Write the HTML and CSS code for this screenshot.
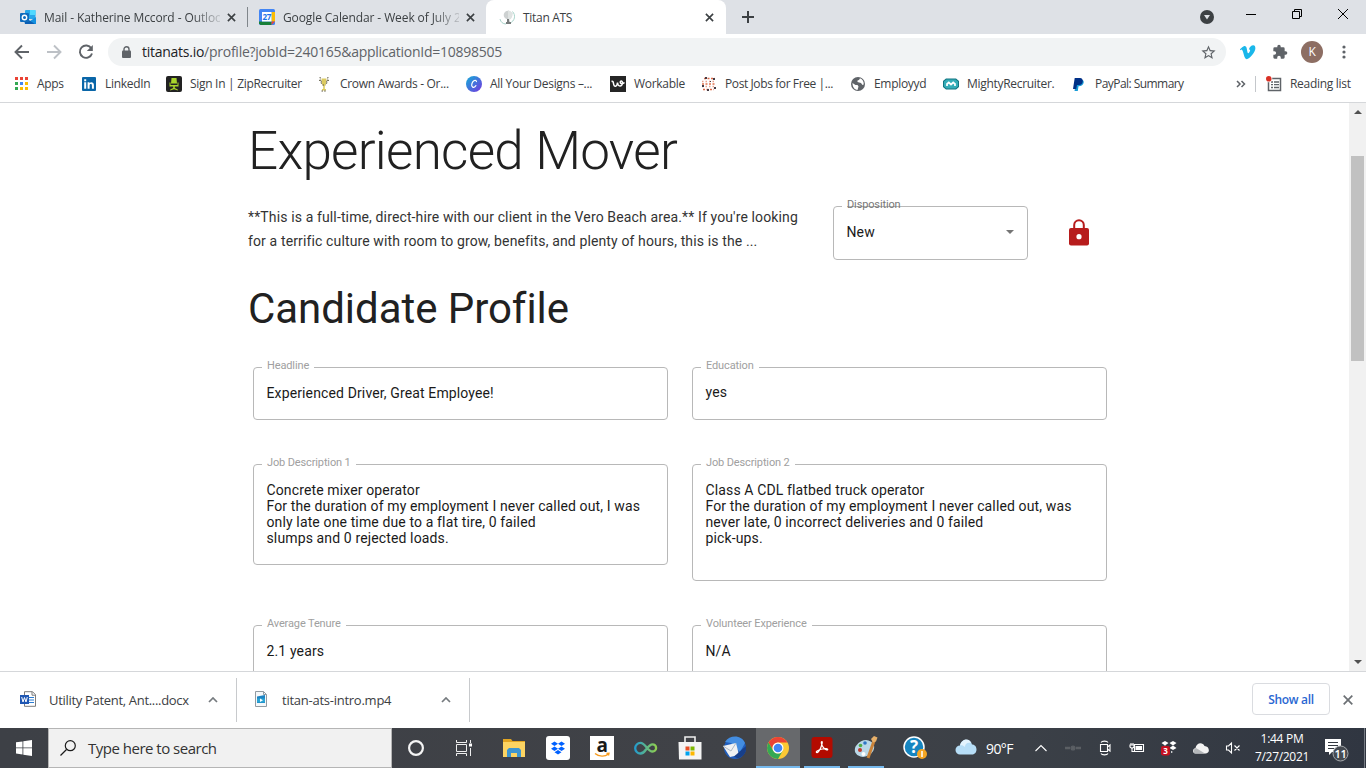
FILE: index.html
```html
<!DOCTYPE html>
<html lang="en">
<head>
    <meta charset="UTF-8">
    <meta name="viewport" content="width=device-width, initial-scale=1.0">
    <title>Titan ATS</title>
    <link rel="stylesheet" href="styles.css">
</head>
<body>
    <!-- tabs -->
    <div class="tabstrip">
        <div class="tab">
            <svg class="favicon" viewBox="0 0 16 16"><rect x="5" y="1" width="10.500" height="9" rx="1" fill="#28a8ea"/><rect x="10" y="1" width="5.500" height="5" fill="#50d9ff"/><path d="M4 9l6 3 6-4v7H5z" fill="#1490df"/><path d="M4 8l11 7H5z" fill="#0a5fb4"/><rect y="4" width="9" height="9" rx="1" fill="#0f6cbd"/><circle cx="4.500" cy="8.500" r="2.200" fill="none" stroke="#fff" stroke-width="1.400"/></svg>
            <span class="tab-title tab-mail">Mail - Katherine Mccord - Outloo</span>
            <svg class="tab-close" viewBox="0 0 10 10"><path d="M1 1l8 8M9 1L1 9"/></svg>
        </div>
        <div class="tab tab-divided">
            <svg class="favicon" viewBox="0 0 16 16"><rect width="16" height="16" rx="1.500" fill="#4285f4"/><path d="M12.500 3H16v9.500h-3.500z" fill="#fbbc04"/><path d="M0 12.500h12.500V16H1.500L0 14.500z" fill="#188038"/><path d="M12.500 12.500H16L12.500 16z" fill="#ea4335"/><rect x="3" y="3" width="9.500" height="9.500" fill="#fff"/><text x="7.800" y="10.700" font-size="8" font-weight="700" text-anchor="middle" fill="#1a73e8">27</text></svg>
            <span class="tab-title tab-cal">Google Calendar - Week of July 2</span>
            <svg class="tab-close" viewBox="0 0 10 10"><path d="M1 1l8 8M9 1L1 9"/></svg>
        </div>
        <div class="tab active">
            <svg class="favicon" viewBox="0 0 16 16"><circle cx="9" cy="6" r="4.300" fill="#cdd1d1"/><path d="M9 1l5 3-2 6-3 1z" fill="#dfe3e2"/><path d="M13.500 2.500A7 7 0 0 1 11 14M1 10a6.500 6.500 0 0 0 6 5" fill="none" stroke="#a9d4cb"/><path d="M8 10h2l.5 3H12v2H7v-2h1z" fill="#777c7c"/></svg>
            <span class="tab-title">Titan ATS</span>
            <svg class="tab-close" viewBox="0 0 10 10"><path d="M1 1l8 8M9 1L1 9"/></svg>
        </div>
        <svg class="new-tab" viewBox="0 0 12 12"><path d="M6 0v12M0 6h12"/></svg>
        <div class="window-buttons">
            <svg class="media" viewBox="0 0 14 14"><circle cx="7" cy="7" r="7" fill="#3c4043"/><path d="M4 5h6L7 9.500z" fill="#dee1e6"/></svg>
            <svg class="win" viewBox="0 0 12 12"><path d="M1 6.500h10"/></svg>
            <svg class="win" viewBox="0 0 12 12"><path d="M1.500 3.500h7v7h-7zM3.500 3.500v-2h7v7h-2"/></svg>
            <svg class="win" viewBox="0 0 12 12"><path d="M1 1l10 10M11 1L1 11"/></svg>
        </div>
    </div>

    <!-- address bar -->
    <div class="toolbar">
        <svg class="nav" viewBox="0 0 16 16"><path d="M15 8H2M8 1.500L1.500 8 8 14.500"/></svg>
        <svg class="nav off" viewBox="0 0 16 16"><path d="M1 8h13M8 1.500L14.500 8 8 14.500"/></svg>
        <svg class="nav" viewBox="0 0 16 16"><path d="M13.300 4.300A6.200 6.200 0 1 0 14 9.500"/><path d="M14.800 1v6H8.800z" fill="#5f6368" stroke="none"/></svg>
        <div class="omnibox">
            <svg class="lock" viewBox="0 0 10 13"><rect y="4.500" width="9" height="7.500" rx="1" fill="#5f6368"/><path d="M2 5V3.200a2.500 2.500 0 0 1 5 0V5" fill="none" stroke="#5f6368" stroke-width="1.400"/></svg>
            <span class="url"><b>titanats.io</b>/profile?jobId=240165&amp;applicationId=10898505</span>
            <svg class="star" viewBox="0 0 24 24"><path d="M22 9.240l-7.190-.620L12 2 9.190 8.630 2 9.240l5.460 4.730L5.820 21 12 17.270 18.180 21l-1.630-7.030L22 9.240zM12 15.400l-3.760 2.270 1-4.280-3.320-2.880 4.380-.380L12 6.100l1.710 4.040 4.380.380-3.320 2.880 1 4.280L12 15.400z" fill="#5f6368"/></svg>
        </div>
        <svg class="ext" viewBox="0 0 24 24"><path d="M23 7c-.1 2.300-1.700 5.500-4.800 9.500C15 20.600 12.300 22.700 10 22.700c-1.400 0-2.500-1.300-3.500-3.800L4.600 12c-.7-2.500-1.500-3.800-2.300-3.800L.7 9.200-.2 8C2 6.200 4.700 3.200 6.500 3c2-.2 3.300 1.200 3.700 4.200 1.200 7.300 1.800 8.300 4 4.800 1.500-2.400 1.400-4.400-.9-3.600C14.300 4.200 17 1.600 20 1.700c2.200.1 3.200 1.900 3 5.300z" fill="#1ab7ea"/></svg>
        <svg class="ext" viewBox="0 0 24 24"><path d="M20.500 11H19V7a2 2 0 0 0-2-2h-4V3.500a2.500 2.500 0 0 0-5 0V5H4a2 2 0 0 0-2 2v3.800h1.500a2.700 2.700 0 0 1 0 5.400H2V20a2 2 0 0 0 2 2h3.800v-1.500a2.700 2.700 0 0 1 5.400 0V22H17a2 2 0 0 0 2-2v-4h1.500a2.500 2.500 0 0 0 0-5z" fill="#5f6368"/></svg>
        <div class="avatar">K</div>
        <svg class="dots" viewBox="0 0 4 14"><circle cx="2" cy="2" r="1.600"/><circle cx="2" cy="7" r="1.600"/><circle cx="2" cy="12" r="1.600"/></svg>
    </div>

    <!-- bookmarks -->
    <div class="bookmarks">
        <div class="bookmark"><svg viewBox="0 0 16 16"><path d="M2 1h3v3H2z M7 1h3v3H7z M12 1h3v3h-3z" fill="#ea4335"/><path d="M2 6h3v3H2z" fill="#34a853"/><path d="M7 6h3v3H7z" fill="#4285f4"/><path d="M12 6h3v3h-3z M7 11h3v3H7z M12 11h3v3h-3z" fill="#fbbc04"/><path d="M2 11h3v3H2z" fill="#34a853"/></svg><span>Apps</span></div>
        <div class="bookmark"><svg viewBox="0 0 16 16"><rect x="1" y="1" width="14" height="14" rx="1" fill="#0a66a8"/><path d="M3.200 6.300h2v6.500h-2zM3.200 3.300h2v2h-2zM6.600 6.300h1.900v1c1-1.700 4.400-1.500 4.400 1.600v3.900h-2V9.400c0-2-2.300-1.800-2.300 0v3.400h-2z" fill="#fff"/></svg><span>LinkedIn</span></div>
        <div class="bookmark"><svg viewBox="0 0 16 16"><rect width="16" height="16" rx="2" fill="#222"/><path d="M5.500 2h5l.5 5.500H5zM3.500 6.500h1v2.500h7V6.500h1v4H8.800V12l3 1.500v1L8 13.300l-3.800 1.200v-1l3-1.500v-1.500H3.500z" fill="#a8d52c"/></svg><span>Sign In | ZipRecruiter</span></div>
        <div class="bookmark"><svg viewBox="0 0 16 16"><path d="M5.500 2.500h5L10 8l-1.200 2v3h1.200v1.500H6V13h1.200v-3L6 8z" fill="#dccb62"/><path d="M4 1l1.500 7M12 1l-1.500 7M6.500 9h3M5.500 15h5M3 4l3 2M13 4l-3 2" stroke="#5c5740" stroke-dasharray="1.500 1.200" fill="none"/></svg><span>Crown Awards - Or...</span></div>
        <div class="bookmark"><svg viewBox="0 0 16 16"><defs><linearGradient id="canva" x1="0" y1="0" x2="1" y2="1"><stop offset=".2" stop-color="#2596d9"/><stop offset="1" stop-color="#7635df"/></linearGradient></defs><circle cx="8" cy="8" r="8" fill="url(#canva)"/><path d="M10.300 6.100c.7-1.700-1.200-2.300-2.500-1.300-1.900 1.300-3.100 5.300-1.100 6.300 1.200.6 2.700-.4 3.500-1.800" fill="none" stroke="#fff" stroke-width="1.200"/></svg><span>All Your Designs –...</span></div>
        <div class="bookmark"><svg viewBox="0 0 16 16"><rect width="16" height="16" fill="#252525"/><path d="M1.500 5.500c1.500-.5 1.800.5 2 2 .5 4 3.500 3.500 4-1 .3 4.500 4.500 4.500 5 .5.200-2.500-2.700-2.500-2.200-.3.300 1.500 2.700 1.300 4.200-.2" fill="none" stroke="#fff" stroke-width="1.500"/></svg><span>Workable</span></div>
        <div class="bookmark tight"><svg viewBox="0 0 16 16"><path d="M3 2.500h11M2 13.500h11" stroke="#dd6b4a" stroke-width="1.500" stroke-dasharray="2 1.500"/><path d="M1 5.500h14M1 10.500h14" stroke="#e9a18c" stroke-width="1.300" stroke-dasharray="1.500 2"/><path d="M1 8h14" stroke="#df734f" stroke-width="1.500" stroke-dasharray="2 1.500"/><path d="M4 1h2v2H4zM12 2h2v2h-2zM1 9h2v2H1zM13 11h2v2h-2zM6 13h2v2H6zM9 5h1v1H9z" fill="#443a43"/></svg><span>Post Jobs for Free |...</span></div>
        <div class="bookmark"><svg viewBox="0 0 16 16"><circle cx="8" cy="8" r="7" fill="#5f6368"/><path d="M2.500 7l3 2h2l1 1.500-1 3.500c-3-.3-5.200-3.300-5-7zM7 2.200h3L9 4 7.500 4.500V6l3.500 1 1.500 2 1.200-.5c.3-2.800-1-5.200-3.700-6.300z" fill="#fff"/></svg><span>Employyd</span></div>
        <div class="bookmark"><svg viewBox="0 0 16 16"><path d="M3 2.500h10L16 5v6l-3 2.500H3L0 11V5z" fill="#127581"/><path d="M3.500 3.500h9L15 5.500v5l-2.500 2h-9L1 10.500v-5z" fill="#34adb8"/><path d="M4 10V8l1.800-1.500L8 8.500l2.200-2L12 8v2" fill="none" stroke="#fff" stroke-width="1.700"/></svg><span>MightyRecruiter.</span></div>
        <div class="bookmark tighter"><svg viewBox="0 0 16 16"><path d="M5.500 4h6c2 .7 1.700 5-2 6l-2 .3-.7 4.700H3.500z" fill="#179bd7"/><path d="M3.700 2H9c4 0 3.800 7-1 7H6l-.8 4H2z" fill="#003087"/></svg><span>PayPal: Summary</span></div>
        <svg class="more" viewBox="0 0 10 8"><path d="M1 1l3 3-3 3M5.500 1l3 3-3 3"/></svg>
        <div class="reading">
            <svg viewBox="0 0 16 16"><path d="M2.500 2.500h12v12h-12z" fill="none" stroke="#5f6368" stroke-width="1.500"/><path d="M5 6h2M8 6h5M5 8.700h2M8 8.700h5M5 11.500h2M8 11.500h5" stroke="#5f6368" stroke-width="1.300"/><circle cx="2.800" cy="2.800" r="3.500" fill="#fff"/><circle cx="2.800" cy="2.800" r="2.800" fill="#d93025"/></svg>
            <span>Reading list</span>
        </div>
    </div>

    <!-- page -->
    <div class="viewport">
        <main class="page">
            <h1>Experienced Mover</h1>
            <div class="job-row">
                <p class="summary">**This is a full-time, direct-hire with our client in the Vero Beach area.** If you're looking<br>for a terrific culture with room to grow, benefits, and plenty of hours, this is the ...</p>
                <div class="field select">
                    <label>Disposition</label>
                    <span>New</span>
                    <i class="caret"></i>
                </div>
                <svg class="red-lock" viewBox="0 0 20 27"><rect y="9" width="20" height="17.500" rx="2" fill="#b71c1c"/><path d="M5.200 9.500V6a4.800 4.800 0 0 1 9.600 0v3.500" fill="none" stroke="#b71c1c" stroke-width="2"/><circle cx="10" cy="17.700" r="2.600" fill="#fff"/></svg>
            </div>
            <h2>Candidate Profile</h2>
            <div class="fields">
                <div class="field"><label>Headline</label>Experienced Driver, Great Employee!</div>
                <div class="field raised"><label>Education</label>yes</div>
                <div class="field"><label>Job Description 1</label>Concrete mixer operator<br>For the duration of my employment I never called out, I was<br>only late one time due to a flat tire, 0 failed<br>slumps and 0 rejected loads.</div>
                <div class="field tall"><label>Job Description 2</label>Class A CDL flatbed truck operator<br>For the duration of my employment I never called out, was<br>never late, 0 incorrect deliveries and 0 failed<br>pick-ups.</div>
                <div class="field"><label>Average Tenure</label>2.1 years</div>
                <div class="field"><label>Volunteer Experience</label>N/A</div>
            </div>
        </main>
        <div class="scrollbar">
            <i class="arrow up"></i>
            <div class="thumb"></div>
            <i class="arrow down"></i>
        </div>
    </div>

    <!-- downloads -->
    <div class="downloads">
        <div class="download">
            <svg class="file" viewBox="0 0 16 16"><path d="M4.500.7h8l3 3v11.600h-11z" fill="#fff" stroke="#7c7c7c"/><path d="M12 .7v3.500h3.500" fill="none" stroke="#7c7c7c"/><path d="M9 6.500h5M9 9h5M9 11.500h5" stroke="#2b7cd3"/><rect y="4" width="9" height="9" fill="#1e56b3"/><path d="M1.700 6l1.300 5 1.500-4.500L6 11l1.300-5" fill="none" stroke="#fff"/></svg>
            <span class="file-name docx">Utility Patent, Ant....docx</span>
            <svg class="chev" viewBox="0 0 10 6"><path d="M1 5l4-4 4 4"/></svg>
        </div>
        <div class="download">
            <svg class="file" viewBox="0 0 16 16"><path d="M2.500.5h8l3 3v12h-11z" fill="#f5f8fa" stroke="#929ba2"/><path d="M10.500.5v3h3" fill="none" stroke="#929ba2"/><path d="M4 5.500l8-1.500v8H4z" fill="#1c83c3"/><path d="M4 7.500h8v4H4z" fill="#2aa4d4"/><path d="M7 7.500l3 1.700-3 1.700z" fill="#fff"/></svg>
            <span class="file-name">titan-ats-intro.mp4</span>
            <svg class="chev" viewBox="0 0 10 6"><path d="M1 5l4-4 4 4"/></svg>
        </div>
        <button class="show-all">Show all</button>
        <svg class="close-bar" viewBox="0 0 10 10"><path d="M.7.7l8.600 8.600M9.300.7L.7 9.300"/></svg>
    </div>

    <!-- taskbar -->
    <div class="taskbar">
        <div class="start"><svg viewBox="0 0 16 16"><path d="M0 2.300L6.500 1.400v6.100H0zM7.300 1.300L16 0v7.500H7.300zM0 8.300h6.500v6.200L0 13.600zM7.300 8.300H16V16l-8.700-1.300z" fill="#fff"/></svg></div>
        <div class="search">
            <svg viewBox="0 0 16 16"><circle cx="10.300" cy="5.700" r="5" fill="none" stroke="#1b1b1b" stroke-width="1.200"/><path d="M6.500 9.500L.5 15.500" stroke="#1b1b1b" stroke-width="1.300"/></svg>
            <span>Type here to search</span>
        </div>
        <div class="apps">
            <div class="app wide"><svg viewBox="0 0 24 24"><circle cx="12" cy="12" r="6.900" fill="none" stroke="#f4f4f4" stroke-width="2.200"/></svg></div>
            <div class="app wide"><svg viewBox="0 0 24 24" fill="none" stroke="#eee"><path d="M4.500 8.500h10v7h-10zM4.500 4v2.500h10V4M4.500 20v-2.500h10V20M18.500 4v3M18.500 12v8"/><path d="M17 7.500h3v3h-3z" fill="#fff" stroke="none"/></svg></div>
            <div class="app first"><svg viewBox="0 0 24 24"><path d="M1 3h8l1.500 2H23v16H1z" fill="#e2a522"/><path d="M1 6h22v15H1z" fill="#fcd462"/><path d="M5 21v-7l2-2h10l2 2v7h-4v-4H9v4z" fill="#3d95d0"/></svg></div>
            <div class="app"><svg viewBox="0 0 24 24"><rect width="24" height="24" rx="3" fill="#fff"/><path d="M8.500 5.500L12 7.800 8.500 10 5 7.800zM15.500 5.500L19 7.800 15.500 10 12 7.800zM8.500 10.500L12 12.700 8.500 15 5 12.700zM15.500 10.500L19 12.700 15.500 15 12 12.700zM12 14l3.500 2.200L12 18.500l-3.500-2.300z" fill="#0061ff"/></svg></div>
            <div class="app amazon"><svg viewBox="0 0 24 24"><rect width="24" height="24" fill="#fff"/><text x="12" y="15.500" font-size="19" font-weight="700" text-anchor="middle" fill="#191919">a</text><path d="M5 17.500c4 3.500 10 3.500 13.500.5M16.500 17.500l2.500-.3-.5 2.300" fill="none" stroke="#f79a1c" stroke-width="1.300"/></svg></div>
            <div class="app"><svg viewBox="0 0 24 24"><defs><linearGradient id="loop"><stop stop-color="#249ccc"/><stop offset="1" stop-color="#8fce50"/></linearGradient></defs><path d="M12 13.500C10 16.500 8.500 17.500 6.500 17.500a5.300 5.300 0 0 1 0-10.600c5 0 7 8.600 12 8.600a3.600 3.600 0 0 0 0-7.200c-2.500 0-4 2-6.500 5.200" fill="none" stroke="url(#loop)" stroke-width="2.300"/></svg></div>
            <div class="app"><svg viewBox="0 0 24 24"><path d="M7 6V1h10v5" fill="none" stroke="#eee" stroke-width="1.600"/><path d="M.5 6h23v17.500H1z" fill="#f4f4f4"/><path d="M7.500 10.500h4v4h-4z" fill="#e74e26"/><path d="M12.500 10.500h4v4h-4z" fill="#7db700"/><path d="M7.500 15.500h4v4h-4z" fill="#00a3ee"/><path d="M12.500 15.500h4v4h-4z" fill="#fdb700"/></svg></div>
            <div class="app"><svg viewBox="0 0 24 24"><circle cx="13" cy="12" r="11" fill="#205dbc"/><path d="M3 6C8-2 20-1 23 7L18 16l-9-9z" fill="#438de1"/><path d="M1 10l13-3 3 12-9 2z" fill="#eff1f3"/><path d="M1 10l8 5 5-8" fill="none" stroke="#aeb8c4"/><path d="M16 17l8-7c1 6-3 12-9 12l-3-1.500z" fill="#173f8a"/></svg></div>
            <div class="app current"><svg viewBox="0 0 24 24"><circle cx="12" cy="12" r="11" fill="#fcc934"/><path d="M2.500 6.500A11 11 0 0 1 21.500 6.500H12A5.500 5.500 0 0 0 7.200 14.800z" fill="#ea4335"/><path d="M2.500 6.500A11 11 0 0 0 12 23l4.800-8.200a5.500 5.500 0 0 1-9.600 0z" fill="#34a853"/><circle cx="12" cy="12" r="5.500" fill="#fff"/><circle cx="12" cy="12" r="4.300" fill="#4285f4"/></svg></div>
            <div class="app running"><svg viewBox="0 0 24 24"><rect x="1.500" y="1" width="21" height="21" rx="3" fill="#b30b00"/><path d="M6.500 16.500c-1-1 2-2.800 5.500-3.500 3.500-.8 6-.5 5.700.6-.7 1.200-4-1-5.500-3.800-1.200-2.300-1-4.300-.3-4.300 1.600.2-2.600 12-5.400 11z" fill="none" stroke="#fff" stroke-width="1.200"/></svg></div>
            <div class="app running"><svg viewBox="0 0 24 24"><ellipse cx="10.500" cy="12.500" rx="10" ry="8" transform="rotate(-25 10.500 12.500)" fill="#b9d7e7"/><circle cx="6" cy="14" r="2" fill="#c0392b"/><circle cx="6.500" cy="9.500" r="1.800" fill="#4dab48"/><circle cx="11" cy="7" r="1.800" fill="#2e75c5"/><circle cx="9.500" cy="18" r="2" fill="#fff"/><path d="M14 22L20 5" stroke="#c98239" stroke-width="3"/><path d="M17 3l3-3 3.500 1.500-1.500 4-3 1z" fill="#e7b06a"/></svg></div>
            <div class="app help"><svg viewBox="0 0 24 24"><circle cx="11" cy="11" r="10" fill="#1685c0" stroke="#fff" stroke-width="1.500"/><text x="11" y="17" font-size="17" font-weight="700" text-anchor="middle" fill="#fff">?</text><circle cx="19" cy="18" r="5" fill="#f5a623"/><path d="M19 15v6" stroke="#fff" stroke-width="1.500"/></svg></div>
        </div>
        <div class="weather">
            <svg viewBox="0 0 22 16"><path d="M5 15.500a4.500 4.500 0 0 1 0-9C6-1 16-1 17 5.500c6 0 6 10 0 10z" fill="#b6ddf6"/><path d="M5 6.500C7-1 15-1 16 4c-4-1-6 1-6 4C8 6 6 6 5 6.500z" fill="#e3f3fd"/></svg>
            <span>90°F</span>
        </div>
        <div class="tray">
            <svg viewBox="0 0 16 16"><path d="M2.500 11L8 5.500l5.500 5.500"/></svg>
            <svg class="dim" viewBox="0 0 16 16"><circle cx="8" cy="8" r="2" fill="#5b5f64"/><path d="M0 8h5M11 8h5" stroke-width="2.500"/></svg>
            <svg viewBox="0 0 16 16"><path d="M3.500 4.500h7v7h-7zM10.500 7l2.500-2v6l-2.500-2M4 2.500C5 .7 10 .7 11 2.500M4 13.500c1 1.800 6 1.800 7 0"/></svg>
            <svg viewBox="0 0 16 16"><path d="M5.500 4.500h9v7h-9zM3 8v3.500h2M1 5h4v2L3 8.500 1 7zM2 3v2M4 3v2"/><path d="M6.500 6H13v4H6.500z" fill="#fff" stroke="none"/></svg>
            <svg viewBox="0 0 16 16"><path d="M4 1l3.500 2L4 5.500.5 3zM12 1l3.500 2L12 5.500 8.500 3zM4 5.500L7.500 8 4 10 .5 8zM12 5.500L15.500 8 12 10 8.500 8zM10 11l2 1-2 1z" fill="#fff" stroke="none"/><rect y="6" width="9" height="9.500" rx="2" fill="#c50f1f" stroke="none"/><text x="4.500" y="13.700" font-size="8" font-weight="700" text-anchor="middle" fill="#fff" stroke="none">3</text></svg>
            <svg viewBox="0 0 16 16"><path d="M2.500 13.500c-3.500-.5-3-5 0-5.500C3.500 2 10 2 11.500 6c5 0 6 7 1.500 7.500z" fill="#f3f3f3" stroke="none"/><path d="M2 13.500c-2-.5-2-4.500 1-5.500l9 5.500z" fill="#b4b7ba" stroke="none"/></svg>
            <svg viewBox="0 0 16 16"><path d="M1.500 6v4h2l3 3V3l-3 3zM9.500 5.500l5 5M14.500 5.500l-5 5"/></svg>
        </div>
        <div class="clock"><span>1:44 PM</span><span>7/27/2021</span></div>
        <div class="notify">
            <svg viewBox="0 0 24 24"><path d="M0 1h16v13H7l-3 3v-3H0z" fill="#fff"/><path d="M3 4.500h10M3 7.500h10M3 10.500h6" stroke="#343941" fill="none"/><circle cx="15.500" cy="15.500" r="7.500" fill="#464b52" stroke="#a4a7ab"/><text x="15.500" y="19.500" font-size="11" font-weight="600" text-anchor="middle" fill="#fff">11</text></svg>
        </div>
    </div>
</body>
</html>
```

FILE: styles.css
```css
* {
  margin: 0;
  padding: 0;
  box-sizing: border-box;
}

body {
  width: 1366px;
  height: 768px;
  overflow: hidden;
  display: flex;
  flex-direction: column;
  background: #fff;
  font-family: "Segoe UI", "Open Sans", "Noto Sans", sans-serif;
  font-size: 12px;
  letter-spacing: -0.3px;
  color: #3c4043;
}

svg {
  display: block;
  flex: none;
}

span {
  white-space: nowrap;
}

/* tabs */
.tabstrip {
  height: 34px;
  display: flex;
  align-items: center;
  background: #dee1e6;
}

.tab {
  width: 247px;
  height: 34px;
  padding-left: 20px;
  display: flex;
  align-items: center;
}

.tab-divided {
  position: relative;
  width: 239px;
  padding-left: 12px;
}

.tab-divided::before {
  content: "";
  position: absolute;
  left: 0;
  top: 7px;
  width: 1px;
  height: 20px;
  background: #80868b;
}

.tab.active {
  width: 240px;
  padding-left: 13px;
  background: #fff;
  border-radius: 8px 8px 0 0;
}

.favicon {
  width: 16px;
  height: 16px;
}

.tab-title {
  width: 176px;
  margin-left: 8px;
}

.tab-mail,
.tab-cal {
  letter-spacing: -0.1px;
  -webkit-mask-image: linear-gradient(to right, #000 148px, transparent 182px);
  mask-image: linear-gradient(to right, #000 148px, transparent 182px);
}

.tab-close {
  width: 9px;
  height: 9px;
  margin-left: 7px;
  fill: none;
  stroke: #3c4043;
  stroke-width: 1.8;
}

.active .tab-close {
  margin-left: 6px;
}

.new-tab {
  width: 12px;
  height: 12px;
  margin-left: 16px;
  fill: none;
  stroke: #3c4043;
  stroke-width: 2;
}

.window-buttons {
  display: flex;
  margin-left: auto;
  padding-right: 17px;
}

.media {
  width: 14px;
  height: 14px;
  margin-right: 31px;
}

.win {
  width: 12px;
  height: 12px;
  margin-top: -2px;
  fill: none;
  stroke: #000;
}

.win + .win {
  margin-left: 34px;
}

/* address bar */
.toolbar {
  height: 34px;
  padding: 2px 0 0 14px;
  display: flex;
  align-items: center;
}

.nav {
  width: 16px;
  height: 16px;
  margin-right: 16px;
  fill: none;
  stroke: #5f6368;
  stroke-width: 1.9;
}

.nav.off {
  stroke: #bdc1c6;
}

.omnibox {
  width: 1118px;
  height: 28px;
  margin-left: -2px;
  padding: 0 9px 0 14px;
  border-radius: 14px;
  background: #f1f3f4;
  display: flex;
  align-items: center;
}

.lock {
  width: 10px;
  height: 13px;
}

.url {
  flex: 1;
  margin: -1px 0 0 10px;
  font-size: 14px;
  letter-spacing: -0.26px;
  color: #5f6368;
}

.url b {
  font-weight: 400;
  color: #202124;
}

.star {
  width: 17px;
  height: 17px;
}

.ext {
  width: 16px;
  height: 16px;
  margin-left: 14px;
}

.ext + .ext {
  margin-left: 16px;
}

.avatar {
  width: 22px;
  height: 22px;
  margin-left: 13px;
  border-radius: 50%;
  background: #8d6e63;
  color: #fff;
  text-align: center;
  line-height: 22px;
}

.dots {
  width: 4px;
  height: 14px;
  margin-left: 19px;
  fill: #5f6368;
}

/* bookmarks */
.bookmarks {
  height: 35px;
  padding: 0 0 3px 13px;
  border-bottom: 1px solid #d5d7da;
  display: grid;
  grid-template-columns: 68px 85px 150px 150px 144px 91px 149px 93px 128px 165px 19px auto;
  align-items: center;
}

.bookmark,
.reading {
  display: flex;
  align-items: center;
}

.bookmark svg,
.reading svg {
  width: 16px;
  height: 16px;
}

.bookmark span,
.reading span {
  margin-left: 8px;
}

.bookmark.tight {
  letter-spacing: -0.4px;
}

.bookmark.tighter {
  letter-spacing: -0.55px;
}

.more {
  width: 10px;
  height: 8px;
  fill: none;
  stroke: #5f6368;
  stroke-width: 1.5;
}

.reading {
  height: 16px;
  padding-left: 10px;
  border-left: 1px solid #c4c7cb;
}

/* page */
.viewport {
  height: 568px;
  display: flex;
  overflow: hidden;
  font-family: Roboto, sans-serif;
  font-size: 14px;
  letter-spacing: 0.13px;
}

.page {
  flex: 1;
  padding: 18px 0 0 248px;
  color: #212121;
}

h1 {
  height: 60px;
  line-height: 60px;
  font-size: 53px;
  font-weight: 300;
  letter-spacing: -0.75px;
}

.job-row {
  height: 54px;
  margin-top: 25px;
  display: flex;
}

.summary {
  width: 585px;
  line-height: 24px;
  margin-top: -1px;
  white-space: nowrap;
  color: #333;
}

.field {
  position: relative;
  min-height: 53px;
  padding: 17px 13px 18px 12.5px;
  border: 1px solid #b8b8b8;
  border-radius: 4px;
  line-height: 16px;
  color: #1a1a1a;
}

.field label {
  position: absolute;
  left: 8px;
  top: -9px;
  padding: 0 5px;
  background: #fff;
  font-size: 11px;
  line-height: 14px;
  letter-spacing: -0.13px;
  color: #a0a0a0;
}

.field.raised {
  padding-top: 16px;
}

.field.tall {
  min-height: 117px;
}

.select {
  width: 195px;
  height: 54px;
  display: flex;
  justify-content: space-between;
}

/* the outline runs through this label */
.select label {
  background: linear-gradient(to right, #fff 5px, transparent 5px);
  color: #777;
}

.caret {
  margin-top: 6px;
  height: 4px;
  border: 4px solid transparent;
  border-top-color: #757575;
  border-bottom: 0;
}

.red-lock {
  width: 20px;
  height: 27px;
  margin: 13px 0 0 41px;
}

h2 {
  height: 54px;
  margin-top: 22px;
  line-height: 54px;
  font-size: 42px;
  font-weight: 400;
  letter-spacing: -0.05px;
}

.fields {
  margin: 31px 0 0 5px;
  display: grid;
  grid-template-columns: 415px 415px;
  gap: 44px 24px;
  align-items: start;
}

.scrollbar {
  width: 17px;
  padding: 7px 2px;
  background: #f1f1f1;
  display: flex;
  flex-direction: column;
}

.thumb {
  height: 205px;
  margin: 42px 0 auto;
  background: #c1c1c1;
}

.arrow {
  align-self: center;
  border: 4px solid transparent;
}

.up {
  border-top: 0;
  border-bottom-color: #505050;
}

.down {
  border-bottom: 0;
  border-top-color: #505050;
}

/* downloads */
.downloads {
  height: 57px;
  border-top: 1px solid #d5d7da;
  display: flex;
  align-items: center;
}

.download {
  width: 237px;
  height: 44px;
  padding: 0 18px 0 20px;
  border-right: 1px solid #c8cacd;
  display: flex;
  align-items: center;
}

.download + .download {
  width: 233px;
  padding: 0 18px 0 16px;
}

.file {
  width: 16px;
  height: 16px;
  margin-top: -2px;
}

.file-name {
  flex: 1;
  margin-left: 13px;
  font-size: 13px;
  letter-spacing: -0.25px;
}

.file-name.docx {
  letter-spacing: -0.31px;
}

.chev {
  width: 10px;
  height: 6px;
  fill: none;
  stroke: #757a7e;
  stroke-width: 1.7;
}

.show-all {
  width: 78px;
  height: 32px;
  margin: -2px 0 0 auto;
  border: 1px solid #dadce0;
  border-radius: 4px;
  background: #fff;
  color: #2a67d2;
  font: 600 12px "Segoe UI", "Open Sans", sans-serif;
  letter-spacing: -0.3px;
}

.close-bar {
  width: 10px;
  height: 10px;
  margin: 0 13px;
  fill: none;
  stroke: #6c7074;
  stroke-width: 1.7;
}

/* taskbar */
.taskbar {
  height: 40px;
  display: flex;
  background: linear-gradient(to right, #3d4046 0, #404247 55%, #3b4047 75%, #303641 100%);
  color: #fff;
}

.start {
  width: 48px;
  display: flex;
  align-items: center;
  justify-content: center;
}

.start svg {
  width: 16px;
  height: 16px;
}

.search {
  width: 344px;
  padding-left: 11px;
  border: 1px solid #b5b5b5;
  background: #f1f1f1;
  display: flex;
  align-items: center;
  color: #333;
  font-size: 15px;
  letter-spacing: -0.5px;
}

.search svg {
  width: 16px;
  height: 16px;
}

.search span {
  margin-left: 12px;
}

.apps {
  display: flex;
}

.app {
  width: 44px;
  border-bottom: 2px solid transparent;
  display: flex;
  align-items: center;
  justify-content: center;
  padding-top: 2px;
}

.app svg {
  width: 24px;
  height: 24px;
}

.app.amazon svg {
  overflow: visible;
}

.app.wide {
  width: 48px;
}

.app.first {
  margin-left: 4px;
}

.app.current {
  background: #67696c;
  border-bottom-color: #76b9ed;
}

.app.running {
  width: 36px;
  margin: 0 4px;
  border-bottom-color: #76b9ed;
}

.app.help {
  margin-left: 5px;
}

.weather {
  width: 85px;
  padding-left: 18px;
  display: flex;
  align-items: center;
  font-size: 14px;
  letter-spacing: -0.6px;
}

.weather svg {
  width: 22px;
  height: 16px;
  margin-top: -3px;
}

.weather span {
  margin-left: 9px;
}

.tray {
  margin-left: 11px;
  display: flex;
  align-items: center;
  gap: 16px;
}

.tray svg {
  width: 16px;
  height: 16px;
  fill: none;
  stroke: #fff;
  stroke-width: 1.1;
}

.tray .dim {
  stroke: #5b5f64;
}

.clock {
  width: 82px;
  display: flex;
  flex-direction: column;
  justify-content: center;
  align-items: center;
  line-height: 18px;
}

.notify {
  width: 40px;
  margin-left: 2px;
  padding-top: 4px;
  border-right: 1px solid #777c84;
  display: flex;
  align-items: center;
}

.notify svg {
  width: 24px;
  height: 24px;
}
```
